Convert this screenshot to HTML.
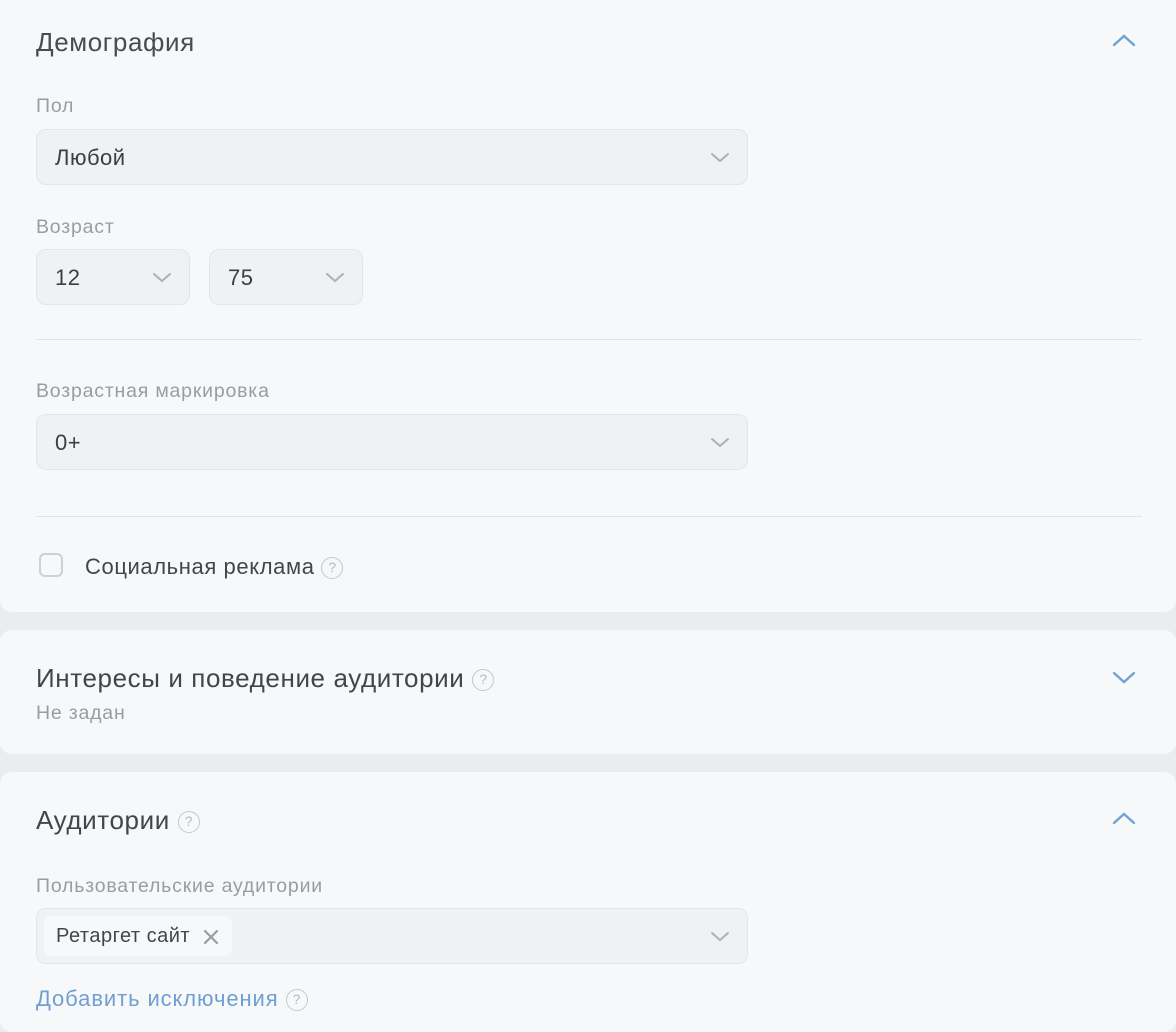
<!DOCTYPE html>
<html><head><meta charset="utf-8"><style>
*{box-sizing:border-box;margin:0;padding:0}
body{width:1176px;height:1014px;overflow:hidden;background:#ebecee;font-family:"Liberation Sans",sans-serif;position:relative}
.card{position:absolute;left:0;width:1176px;background:#f7f8fa;border-radius:12px}
.abs{position:absolute;white-space:nowrap}
.title{font-size:26px;color:#4a4b4d;letter-spacing:0.6px}
.label{font-size:19.5px;color:#9a9c9f;letter-spacing:0.8px}
.inp{position:absolute;background:#f0f1f3;border:1px solid #e4e5e8;border-radius:10px;font-size:22px;color:#3d3e40;letter-spacing:0.5px}
.inp span{position:absolute;left:18px;top:15px}
.chev{position:absolute;top:50%;margin-top:-5px}
.hr{position:absolute;left:36px;width:1106px;height:1px;background:#e3e4e6}
.q{display:inline-block;width:22px;height:22px;border:1.5px solid #c6c7c9;border-radius:50%;color:#b8b9bc;font-size:14px;text-align:center;line-height:19px;vertical-align:middle;letter-spacing:0}
</style></head><body>
<div class="card" style="top:-12px;height:624px"></div>
<div class="abs title" style="left:36px;top:27px">Демография</div>
<svg class="abs" style="left:1112px;top:33px" width="24" height="14"><path d="M2 12L12 3L22 12" fill="none" stroke="#6fa2d6" stroke-width="2.4" stroke-linecap="round"/></svg>
<div class="abs label" style="left:36px;top:95px">Пол</div>
<div class="inp" style="left:36px;top:129px;width:712px;height:56px"><span>Любой</span><svg class="chev" style="right:17px" width="20" height="11"><path d="M2 2L10 9L18 2" fill="none" stroke="#aeb0b3" stroke-width="2" stroke-linecap="round"/></svg></div>
<div class="abs label" style="left:36px;top:216px">Возраст</div>
<div class="inp" style="left:36px;top:249px;width:154px;height:56px"><span>12</span><svg class="chev" style="right:17px" width="20" height="11"><path d="M2 2L10 9L18 2" fill="none" stroke="#aeb0b3" stroke-width="2" stroke-linecap="round"/></svg></div>
<div class="inp" style="left:209px;top:249px;width:154px;height:56px"><span>75</span><svg class="chev" style="right:17px" width="20" height="11"><path d="M2 2L10 9L18 2" fill="none" stroke="#aeb0b3" stroke-width="2" stroke-linecap="round"/></svg></div>
<div class="hr" style="top:339px"></div>
<div class="abs label" style="left:36px;top:380px">Возрастная маркировка</div>
<div class="inp" style="left:36px;top:414px;width:712px;height:56px"><span>0+</span><svg class="chev" style="right:17px" width="20" height="11"><path d="M2 2L10 9L18 2" fill="none" stroke="#aeb0b3" stroke-width="2" stroke-linecap="round"/></svg></div>
<div class="hr" style="top:516px"></div>
<div class="abs" style="left:39px;top:553px;width:24px;height:24px;border:2px solid #cfd0d3;border-radius:6px;background:#f7f8fa"></div>
<div class="abs" style="left:85px;top:554px;font-size:22px;color:#444547;letter-spacing:0.6px">Социальная реклама <span class="q">?</span></div>

<div class="card" style="top:630px;height:124px"></div>
<div class="abs" style="left:36px;top:663px;font-size:26px;color:#444547;letter-spacing:0.6px">Интересы и поведение аудитории <span class="q">?</span></div>
<div class="abs label" style="left:36px;top:702px;font-size:19.5px">Не задан</div>
<svg class="abs" style="left:1112px;top:671px" width="24" height="14"><path d="M2 2L12 11L22 2" fill="none" stroke="#6fa2d6" stroke-width="2.4" stroke-linecap="round"/></svg>

<div class="card" style="top:772px;height:260px"></div>
<div class="abs" style="left:36px;top:805px;font-size:26px;color:#444547;letter-spacing:0.6px">Аудитории <span class="q">?</span></div>
<svg class="abs" style="left:1112px;top:811px" width="24" height="14"><path d="M2 12L12 3L22 12" fill="none" stroke="#6fa2d6" stroke-width="2.4" stroke-linecap="round"/></svg>
<div class="abs label" style="left:36px;top:875px">Пользовательские аудитории</div>
<div class="inp" style="left:36px;top:908px;width:712px;height:56px">
<div class="abs" style="left:7px;top:7px;width:188px;height:40px;background:#f7f8fa;border-radius:7px"></div>
<div class="abs" style="left:19px;top:16px;font-size:20px;color:#444547;letter-spacing:0.5px">Ретаргет сайт</div>
<svg class="abs" style="left:166px;top:20px" width="16" height="16"><path d="M2 2L14 14M14 2L2 14" stroke="#9a9c9f" stroke-width="2.2" stroke-linecap="round"/></svg>
<svg class="chev" style="right:17px" width="20" height="11"><path d="M2 2L10 9L18 2" fill="none" stroke="#aeb0b3" stroke-width="2" stroke-linecap="round"/></svg></div>
<div class="abs" style="left:36px;top:986px;font-size:22px;color:#6f9fd3;letter-spacing:0.9px">Добавить исключения <span class="q">?</span></div>
</body></html>
